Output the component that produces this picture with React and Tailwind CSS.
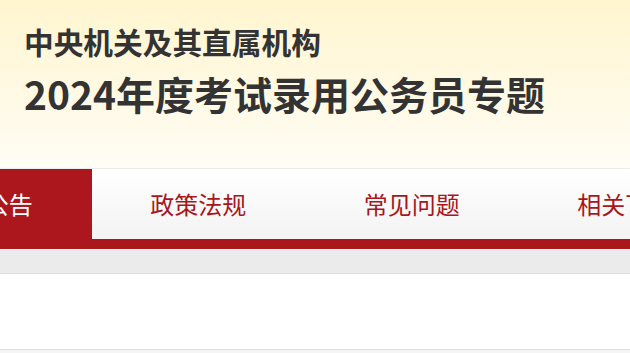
import React from "react";

const tabs = ["招考公告", "政策法规", "常见问题", "相关下载"];

const App = () => {
  return (
    <div
      className="w-[630px] h-[353px] overflow-hidden bg-white"
      style={{ fontFamily: '"Noto Sans CJK SC", "Noto Sans", sans-serif' }}
    >
      <div className="h-[168px] bg-gradient-to-b from-[#fff5cf] to-[#fffdf5] pl-[24px] pt-[22px]">
        <h2 className="text-[29.7px] leading-[40px] font-bold text-[#333333] whitespace-nowrap">
          中央机关及其直属机构
        </h2>
        <h1 className="mt-[3px] text-[39px] leading-[56px] font-bold text-[#333333] whitespace-nowrap">
          2024年度考试录用公务员专题
        </h1>
      </div>

      <div className="flex -ml-[122px] w-max border-t border-[#ececec]">
        {tabs.map((tab, i) => (
          <div
            key={tab}
            className={
              i === 0
                ? "w-[213.5px] h-[70px] flex items-center justify-center bg-[#ab171d] text-white text-[24px]"
                : "w-[213.5px] h-[70px] flex items-center justify-center bg-gradient-to-b from-white to-[#f3f3f3] text-[#a8161c] text-[24px]"
            }
          >
            {tab}
          </div>
        ))}
      </div>
      <div className="h-[10px] bg-[#ab171d]" />
      <div className="h-[1px] bg-[#f6f6f6]" />
      <div className="h-[23px] bg-[#ebebeb] border-b border-[#dcdcdc] box-content" />
      <div className="h-[75px] bg-white border-b border-[#dedede] box-content" />
      <div className="h-[10px] bg-[#f5f5f5]" />
    </div>
  );
};

export default App;
